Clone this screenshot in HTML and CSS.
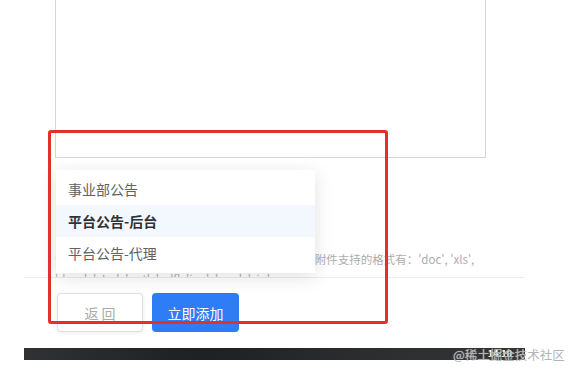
FILE: index.html
```html
<!DOCTYPE html>
<html lang="zh-CN">
<head>
    <meta charset="UTF-8">
    <meta name="viewport" content="width=device-width, initial-scale=1.0">
    <title>添加公告</title>
    <link rel="stylesheet" href="styles.css">
</head>
<body>
    <div class="dialog">
        <div class="dialog-body">
            <div class="textarea"></div>
            <div class="hint">
                温馨提示：每个上传的附件大小均不能超过20MB，附件支持的格式有：'doc', 'xls',<br>
                'docx', 'xlsx', 'ppt', 'pdf', 'jpg', 'png', 'zip'
            </div>
        </div>
        <div class="dialog-footer">
            <button class="btn btn-back">返 回</button>
            <button class="btn btn-primary">立即添加</button>
        </div>
        <div class="taskbar">
            <span class="clock">14:10</span>
        </div>
    </div>

    <!-- 下拉选项 -->
    <ul class="select-dropdown">
        <li class="select-item">事业部公告</li>
        <li class="select-item hover">平台公告-后台</li>
        <li class="select-item">平台公告-代理</li>
    </ul>

    <div class="mark-box"></div>
    <div class="watermark">@稀土掘金技术社区</div>
</body>
</html>
```

FILE: styles.css
```css
:root {
    --azul: #2e7cf6;
    --texto: #606266;
    --borda: #d6d6d6;
    --vermelho: #e62e2a;
}

body {
    font-family: "Noto Sans CJK SC", "Noto Sans", sans-serif;
    background-color: #ffffff;
    margin: 0;
    overflow: hidden;
}

.dialog {
    margin-left: 24px;
    width: 501px;
}

.dialog-body {
    height: 277px;
    overflow: hidden;
    padding: 0 38px 0 31px;
    box-sizing: border-box;
}

.textarea {
    margin-top: -10px;
    height: 168px;
    width: 431px;
    border: 1px solid var(--borda);
    box-sizing: border-box;
}

.hint {
    margin-top: 91px;
    font-size: 11.5px;
    line-height: 20px;
    color: #adadad;
    white-space: nowrap;
}

.dialog-footer {
    border-top: 1px solid #ececec;
    padding: 15px 33px 0;
    display: flex;
    gap: 9px;
}

.btn {
    height: 39px;
    border-radius: 4px;
    font-family: inherit;
    font-size: 14px;
    cursor: pointer;
}

.btn-back {
    width: 86px;
    background: #ffffff;
    color: #ababab;
    border: 1px solid #dedede;
    box-shadow: 0 1px 4px rgba(0, 0, 0, 0.08);
}

.btn-primary {
    width: 87px;
    background: var(--azul);
    color: #ffffff;
    border: none;
    text-decoration: underline;
    text-underline-offset: 3px;
}

.taskbar {
    margin-top: 16px;
    height: 12px;
    background: linear-gradient(90deg, #303234, #1d2124 35%, #2a2c2e 65%, #353535);
    display: flex;
    justify-content: flex-end;
    align-items: center;
    padding-right: 13px;
}

.clock {
    color: #ffffff;
    font-size: 9px;
    font-weight: bold;
    line-height: 12px;
}

.select-dropdown {
    position: absolute;
    left: 56px;
    top: 170px;
    width: 259px;
    margin: 0;
    padding: 3px 0 4px;
    list-style: none;
    background: #ffffff;
    box-shadow: 0 4px 18px rgba(0, 0, 0, 0.12);
}

.select-item {
    height: 32px;
    line-height: 32px;
    padding: 0 12px;
    font-size: 14px;
    color: var(--texto);
}

.select-item.hover {
    background: #f3f8fe;
    color: #303133;
    font-weight: bold;
}

.mark-box {
    position: absolute;
    left: 48px;
    top: 130px;
    width: 340px;
    height: 194px;
    border: 3px solid var(--vermelho);
    border-radius: 3px;
    box-sizing: border-box;
}

.watermark {
    position: absolute;
    left: 453px;
    top: 345px;
    font-size: 12.5px;
    color: #b4b4b4;
    text-shadow: 0 0 1px rgba(255, 255, 255, 0.6);
}
```
